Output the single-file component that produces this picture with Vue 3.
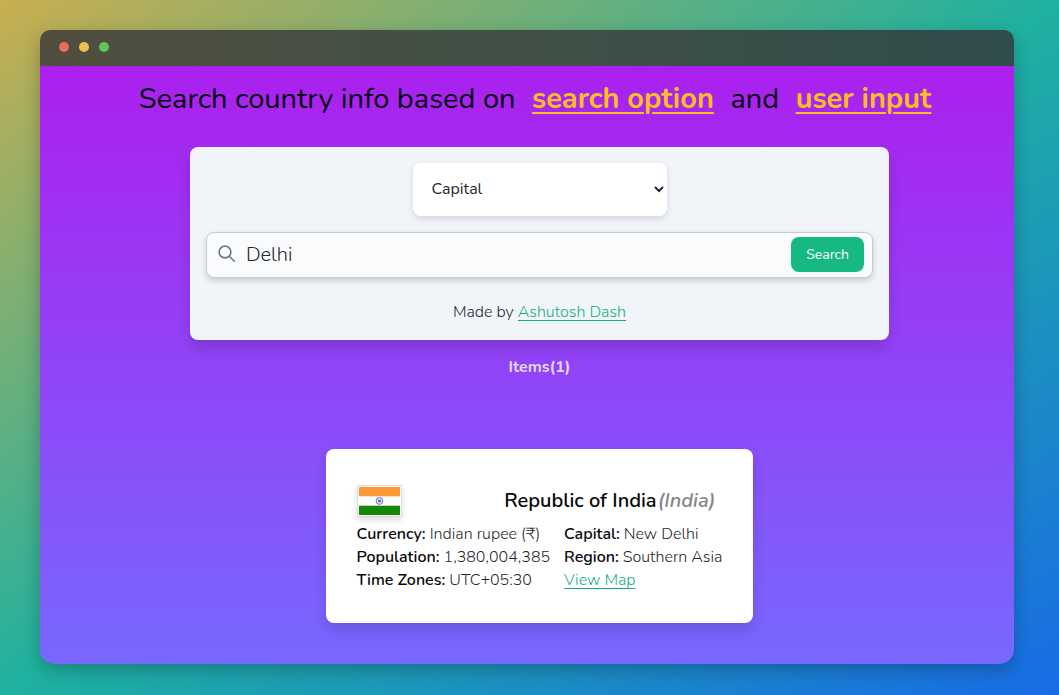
<script setup>
import { ref } from 'vue'

const option = ref('Capital')
const query = ref('Delhi')
</script>

<template>
  <div class="desktop">
    <div class="window">
      <div class="titlebar">
        <span class="dot red"></span>
        <span class="dot yellow"></span>
        <span class="dot green"></span>
      </div>
      <main class="page">
        <h1>Search country info based on <strong>search option</strong> and <strong>user input</strong></h1>
        <form class="panel" @submit.prevent>
          <select v-model="option" class="option" aria-label="Search option">
            <option>Capital</option>
            <option>Name</option>
            <option>Region</option>
          </select>
          <div class="searchbox">
            <svg class="lens" viewBox="0 0 18 18" aria-hidden="true">
              <circle cx="7" cy="7" r="5.9" />
              <path d="M11.3 11.3L16.8 16.8" />
            </svg>
            <input v-model="query" type="text" aria-label="Search text" />
            <button type="submit">Search</button>
          </div>
          <p class="credit">Made by <a href="#">Ashutosh Dash</a></p>
        </form>
        <p class="count">Items(1)</p>
        <article class="country">
          <header>
            <svg class="flag" viewBox="0 0 41 28" role="img" aria-label="Flag of India">
              <rect width="41" height="28" fill="#fff" />
              <rect width="41" height="9.3" fill="#ff9933" />
              <rect y="18.7" width="41" height="9.3" fill="#138808" />
              <circle cx="20.5" cy="14" r="3.4" fill="#dcdcf6" stroke="#6d6dc8" stroke-width=".9" />
              <circle cx="20.5" cy="14" r="1.3" fill="#4b4bb8" />
            </svg>
            <h2>Republic of India<em>(India)</em></h2>
          </header>
          <div class="facts">
            <p><b>Currency:</b> Indian rupee (₹)</p>
            <p><b>Capital:</b> New Delhi</p>
            <p><b>Population:</b> 1,380,004,385</p>
            <p><b>Region:</b> Southern Asia</p>
            <p><b>Time Zones:</b> UTC+05:30</p>
            <p><a href="#">View Map</a></p>
          </div>
        </article>
      </main>
    </div>
  </div>
</template>

<style>
body {
  margin: 0;
}
</style>

<style scoped>
* {
  box-sizing: border-box;
}
.desktop {
  min-height: 100vh;
  display: flex;
  padding: 30px 45px 31px 40px;
  background: linear-gradient(to bottom right, #c9ae50, #1fb1a0 50%, #186be6);
  font-family: Nunito, Lato, "Noto Sans", sans-serif;
  font-size: 16px;
  font-weight: 300;
  line-height: 23px;
  color: #111827;
}
.window {
  flex: 1;
  display: flex;
  flex-direction: column;
  border-radius: 10px 10px 15px 15px;
  overflow: hidden;
  box-shadow: 0 6px 18px rgba(0, 0, 0, 0.25);
}
.titlebar {
  height: 36px;
  display: flex;
  align-items: center;
  gap: 10px;
  padding: 0 19px 2px;
  background: linear-gradient(to right, #504e3e, #415045 45%, #304c4c);
}
.dot {
  width: 10px;
  height: 10px;
  border-radius: 50%;
}
.red { background: #ec6a5e; }
.yellow { background: #f0bd4f; }
.green { background: #62c454; }
.page {
  flex: 1;
  display: flex;
  flex-direction: column;
  align-items: center;
  padding: 13px 0 40px 25px;
  background: linear-gradient(#ab20ee, #7768ff);
}
h1, h2, p {
  margin: 0;
}
h1 {
  font-size: 29px;
  line-height: 40px;
  font-weight: 400;
  color: #050010;
}
h1 strong {
  margin: 0 9px;
  font-weight: 700;
  color: #fbbf24;
  text-decoration: underline;
  text-decoration-thickness: 2px;
  text-underline-offset: 4px;
}
.panel {
  width: calc(74% - 3px);
  margin-top: 28px;
  padding: 16px;
  display: flex;
  flex-direction: column;
  align-items: center;
  border-radius: 8px;
  background: #f1f5f9;
  box-shadow: 0 8px 14px rgba(0, 0, 0, 0.14);
}
.option {
  width: 254px;
  height: 53px;
  padding: 0 0 2px 15px;
  border: 0;
  border-radius: 8px;
  background: #fff;
  box-shadow: 0 3px 6px rgba(0, 0, 0, 0.12);
  font: inherit;
  font-weight: 400;
  color: #27272a;
}
.searchbox {
  width: 100%;
  height: 46px;
  margin-top: 16px;
  padding: 0 8px 2px 11px;
  display: flex;
  align-items: center;
  border: 1px solid #c8ccd0;
  border-radius: 8px;
  background: #f9fbfd;
  box-shadow: 0 3px 6px rgba(0, 0, 0, 0.16);
}
.lens {
  width: 18px;
  height: 18px;
  fill: none;
  stroke: #74777c;
  stroke-width: 1.6;
}
input {
  flex: 1;
  min-width: 0;
  padding: 0 10px;
  border: 0;
  outline: 0;
  background: none;
  font: inherit;
  font-size: 20px;
  color: #27272a;
}
button {
  width: 73px;
  height: 35px;
  padding: 0;
  border: 0;
  border-radius: 8px;
  background: #15b981;
  color: #fff;
  font: inherit;
  font-size: 14px;
  font-weight: 400;
}
.credit {
  margin: 23px 0 0;
  color: #27272a;
}
a {
  color: #10b07c;
  text-decoration: underline;
  text-underline-offset: 3px;
}
.count {
  margin-top: 16px;
  font-weight: 700;
  color: #e4d9fb;
}
.country {
  margin-top: 70px;
  padding: 36px 31px 31px;
  border-radius: 8px;
  background: #fff;
  box-shadow: 0 8px 14px rgba(0, 0, 0, 0.12);
}
.country header {
  display: flex;
  align-items: center;
  justify-content: space-between;
  padding-right: 7px;
}
.flag {
  width: 45px;
  height: 32px;
  padding: 1px;
  border: 1px solid #dedede;
  box-shadow: 0 3px 6px rgba(0, 0, 0, 0.14);
}
h2 {
  font-size: 20px;
  line-height: 28px;
  font-weight: 600;
  color: #09090b;
}
h2 em {
  margin-left: 1px;
  color: #858585;
}
.facts {
  margin-top: 6px;
  display: grid;
  grid-template-columns: auto auto;
  column-gap: 14px;
  color: #27272a;
}
.facts b {
  font-weight: 600;
  color: #09090b;
}
</style>
